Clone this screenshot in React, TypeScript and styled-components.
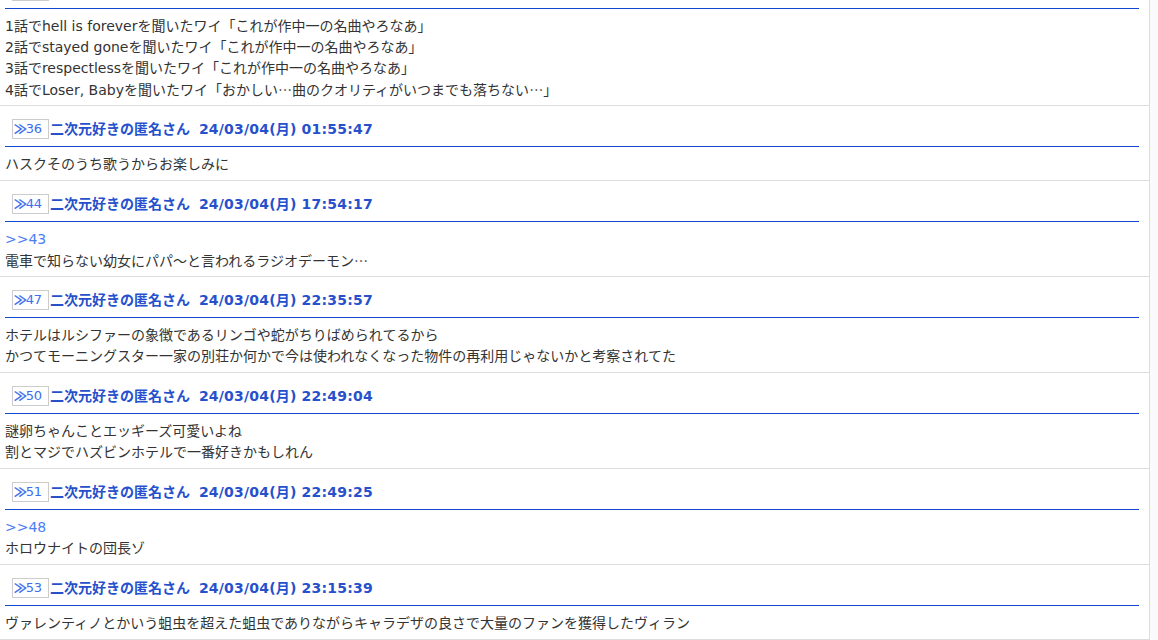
import styled, { createGlobalStyle } from 'styled-components';

const GlobalStyle = createGlobalStyle`
  html, body {
    margin: 0;
    padding: 0;
    background-color: #FAFAFA;
    overflow: hidden;
  }
`;

const Viewport = styled.div`
  height: 640px;
  overflow: hidden;
`;

const Thread = styled.div`
  width: 1149px;
  margin-top: -32px;
  background-color: #FFFFFF;
  border-right: 1px solid #DDDDDD;
  font-family: "DejaVu Sans", "Noto Sans CJK JP", sans-serif;
  font-size: 14px;
  color: #333333;
`;

const Post = styled.div`
  border-bottom: 1px solid #DDDDDD;
`;

const Header = styled.div`
  box-sizing: border-box;
  height: 41px;
  margin: 0 10px 0 5px;
  padding: 13px 0 0 7px;
  border-bottom: 1px solid #1347D3;
  display: flex;
  align-items: flex-start;
  white-space: pre;
`;

const ResNumber = styled.span`
  box-sizing: border-box;
  height: 20px;
  min-width: 37px;
  padding: 0 1px;
  border: 1px solid #CCCCCC;
  display: flex;
  align-items: center;
  color: #3C6EF0;
  font-size: 13px;
  line-height: 18px;
  letter-spacing: -0.3px;
`;

const Chevron = styled.span`
  font-family: "Noto Sans CJK JP", sans-serif;
  font-size: 13px;
  font-weight: 900;
  margin-right: -1px;
`;

const Author = styled.span`
  height: 20px;
  color: #2650CC;
  font-weight: 700;
  line-height: 20px;
  margin-left: 1px;
  overflow: hidden;
`;

const Stamp = styled.span`
  margin-left: 4px;
  letter-spacing: 0.2px;
`;

const Body = styled.div`
  padding: 7px 5px 5px;
`;

const Line = styled.div`
  height: 21px;
  line-height: 21px;
  white-space: pre;
  overflow: hidden;
`;

const Ellipsis = styled.span`
  font-family: "Noto Sans CJK JP", sans-serif;
`;

const Anchor = styled(Line)`
  color: #4A7EF2;
`;

type PostData = {
  no: number;
  date: string;
  anchor?: string;
  lines: string[];
};

const posts: PostData[] = [
  {
    no: 35,
    date: '24/03/04(月) 01:42:10',
    lines: [
      '1話でhell is foreverを聞いたワイ「これが作中一の名曲やろなあ」',
      '2話でstayed goneを聞いたワイ「これが作中一の名曲やろなあ」',
      '3話でrespectlessを聞いたワイ「これが作中一の名曲やろなあ」',
      '4話でLoser, Babyを聞いたワイ「おかしい…曲のクオリティがいつまでも落ちない…」',
    ],
  },
  { no: 36, date: '24/03/04(月) 01:55:47', lines: ['ハスクそのうち歌うからお楽しみに'] },
  { no: 44, date: '24/03/04(月) 17:54:17', anchor: '>>43', lines: ['電車で知らない幼女にパパ～と言われるラジオデーモン…'] },
  {
    no: 47,
    date: '24/03/04(月) 22:35:57',
    lines: [
      'ホテルはルシファーの象徴であるリンゴや蛇がちりばめられてるから',
      'かつてモーニングスター一家の別荘か何かで今は使われなくなった物件の再利用じゃないかと考察されてた',
    ],
  },
  {
    no: 50,
    date: '24/03/04(月) 22:49:04',
    lines: ['謎卵ちゃんことエッギーズ可愛いよね', '割とマジでハズビンホテルで一番好きかもしれん'],
  },
  { no: 51, date: '24/03/04(月) 22:49:25', anchor: '>>48', lines: ['ホロウナイトの団長ゾ'] },
  {
    no: 53,
    date: '24/03/04(月) 23:15:39',
    lines: ['ヴァレンティノとかいう蛆虫を超えた蛆虫でありながらキャラデザの良さで大量のファンを獲得したヴィラン'],
  },
];

// full-width ellipsis comes from the CJK font, like the original page
const renderLine = (line: string) =>
  line.split('…').map((part, i) => (
    <span key={i}>
      {i > 0 && <Ellipsis>…</Ellipsis>}
      {part}
    </span>
  ));

function App() {
  return (
    <Viewport>
      <GlobalStyle />
      <Thread>
        {posts.map((post) => (
          <Post key={post.no}>
            <Header>
              <ResNumber>
                <Chevron>≫</Chevron>
                {post.no}
              </ResNumber>
              <Author>
                二次元好きの匿名さん <Stamp>{post.date}</Stamp>
              </Author>
            </Header>
            <Body>
              {post.anchor && <Anchor>{post.anchor}</Anchor>}
              {post.lines.map((line) => (
                <Line key={line}>{renderLine(line)}</Line>
              ))}
            </Body>
          </Post>
        ))}
      </Thread>
    </Viewport>
  );
}

export default App;
